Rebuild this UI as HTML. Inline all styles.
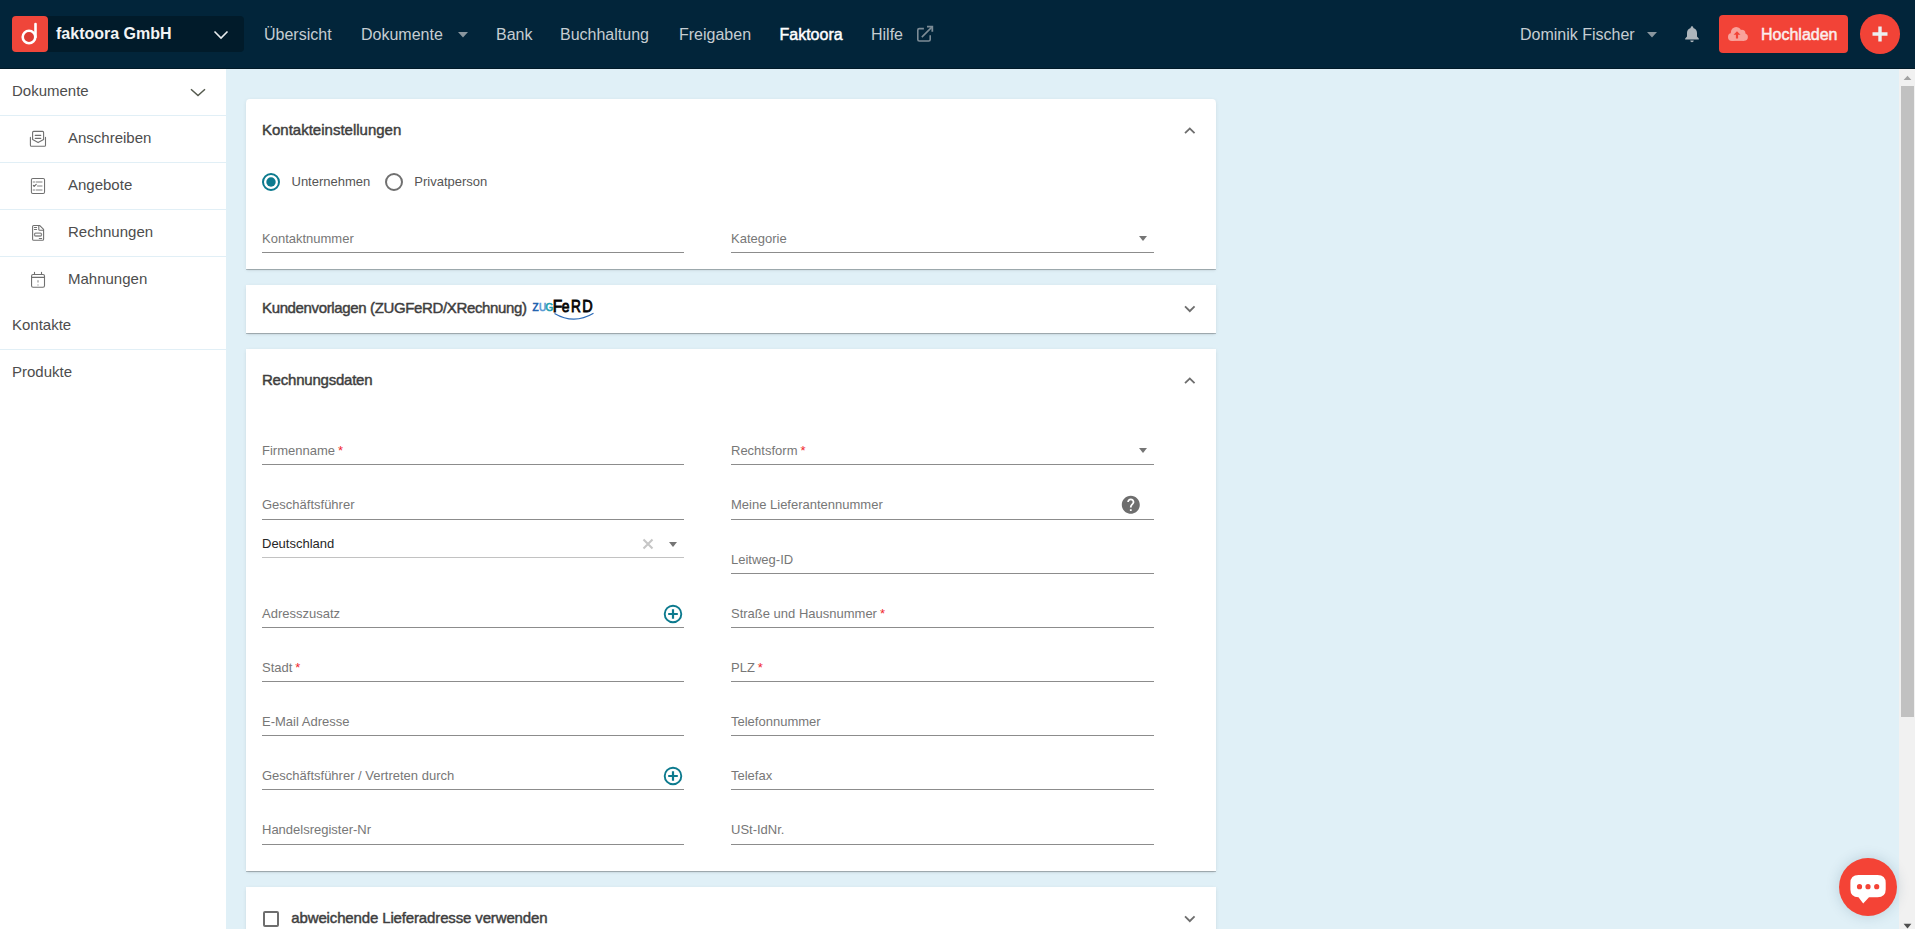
<!DOCTYPE html>
<html><head><meta charset="utf-8">
<style>
*{box-sizing:border-box;margin:0;padding:0}
html,body{width:1915px;height:929px;overflow:hidden}
body{position:relative;background:#e0f0f7;font-family:"Liberation Sans",sans-serif}
.a{position:absolute;white-space:nowrap;line-height:1}
#hdr{position:absolute;left:0;top:0;width:1915px;height:69px;background:#02253a;border-bottom:1px solid #011a28}
.nav{font-size:16px;color:#c6cdd2;top:26.5px}
#side{position:absolute;left:0;top:69px;width:226px;height:860px;background:#fff}
.sep{position:absolute;left:0;width:226px;height:1px;background:#e1eff6}
.st{font-size:15px;color:#4d4d4d}
.card{position:absolute;left:246px;width:970px;background:#fff;border-radius:4px;
 box-shadow:0 1px 0 0 rgba(0,0,0,.2),0 2px 2px -1px rgba(0,0,0,.12),0 1px 4px 0 rgba(0,0,0,.07)}
.h{font-size:15px;color:#3e3e3e;-webkit-text-stroke:0.45px #3e3e3e}
.lb{font-size:13px;color:#777}
.ul{position:absolute;height:1px;background:#8c8c8c}
.req{color:#f0262c}
#sb{position:absolute;left:1899px;top:69px;width:16px;height:860px;background:#f1f1f1}
</style></head><body>

<div id="hdr"></div>
<!-- logo -->
<div class="a" style="left:40px;top:16px;width:204px;height:36px;background:#011b2a;border-radius:4px"></div>
<div class="a" style="left:12px;top:16px;width:36px;height:36px;background:#ef463a;border-radius:4px"></div>
<svg class="a" style="left:12px;top:16px" width="36" height="36" viewBox="0 0 36 36">
 <circle cx="17" cy="21" r="6.3" fill="#dc3c33" stroke="#fff" stroke-width="2.6"/>
 <line x1="23.5" y1="8" x2="23.5" y2="21" stroke="#fff" stroke-width="2.6" stroke-linecap="round"/>
</svg>
<div class="a" style="left:56px;top:26px;font-size:16px;font-weight:bold;color:#f2f4f5">faktoora GmbH</div>
<svg class="a" style="left:213px;top:30px" width="16" height="10" viewBox="0 0 16 10"><path d="M1.5 1.5 L8 8 L14.5 1.5" fill="none" stroke="#e8ecee" stroke-width="1.6"/></svg>

<div class="a nav" style="left:264px">Übersicht</div>
<div class="a nav" style="left:361px">Dokumente</div>
<svg class="a" style="left:458px;top:32px" width="10" height="6" viewBox="0 0 10 6"><path d="M0 0H10L5 5.5Z" fill="#8a969e"/></svg>
<div class="a nav" style="left:496px">Bank</div>
<div class="a nav" style="left:560px">Buchhaltung</div>
<div class="a nav" style="left:679px">Freigaben</div>
<div class="a nav" style="left:779.5px;color:#fff;-webkit-text-stroke:0.45px #fff">Faktoora</div>
<div class="a nav" style="left:871px">Hilfe</div>
<svg class="a" style="left:912px;top:22px" width="26" height="24" viewBox="0 0 26 24" fill="none" stroke="#7d8c96" stroke-width="1.6"><path d="M11.9 6.6H7.3Q5.8 6.6 5.8 8.1V17.5Q5.8 19 7.3 19H16.7Q18.2 19 18.2 17.5V13.2"/><path d="M9.8 15.1L19.8 5.1"/><path d="M15 4.7H20.3V9.8" stroke-width="1.8"/></svg>

<div class="a nav" style="left:1520px;top:27px">Dominik Fischer</div>
<svg class="a" style="left:1647px;top:32px" width="10" height="6" viewBox="0 0 10 6"><path d="M0 0H10L5 5.5Z" fill="#8a969e"/></svg>
<svg class="a" style="left:1684px;top:25px" width="16" height="18" viewBox="0 0 16 18"><path d="M8 1.2c.8 0 1.3.6 1.3 1.3v.4c2.3.6 3.7 2.6 3.7 5v3.6l1.8 2v1H1.2v-1l1.8-2V7.9c0-2.4 1.4-4.4 3.7-5v-.4C6.7 1.8 7.2 1.200 8 1.2zM6.3 15.6h3.4c0 1-.8 1.6-1.7 1.6s-1.7-.6-1.700-1.6z" fill="#aeb6bc"/></svg>

<div class="a" style="left:1719px;top:15px;width:129px;height:38px;background:#f24337;border-radius:4px"></div>
<svg class="a" style="left:1676px;top:20px" width="80" height="28" viewBox="0 0 80 28"><g fill="#f9a29b"><circle cx="60.2" cy="12.2" r="5.3"/><circle cx="65.8" cy="13.3" r="3.6"/><circle cx="56" cy="16.9" r="4"/><circle cx="68.2" cy="17.1" r="3.7"/><rect x="56" y="13" width="12.2" height="7.9"/></g><path d="M61 11.2L57.5 14.8H59.9V18.6H62.1V14.8H64.5Z" fill="#f24337"/></svg>
<div class="a" style="left:1761px;top:26.8px;font-size:16px;color:#fbeeee;-webkit-text-stroke:0.5px #fbeeee">Hochladen</div>
<div class="a" style="left:1860px;top:14px;width:40px;height:39.5px;border-radius:50%;background:#f24337"></div>
<svg class="a" style="left:1872px;top:26px" width="16" height="16" viewBox="0 0 16 16"><path d="M8 0.5V15.5M0.5 8H15.5" stroke="#eceff1" stroke-width="3.4"/></svg>

<!-- sidebar -->
<div id="side"></div>
<div class="a st" style="left:12px;top:83.1px">Dokumente</div>
<svg class="a" style="left:190px;top:88px" width="16" height="10" viewBox="0 0 16 10"><path d="M1 1.200L8 7.500L15 1.200" fill="none" stroke="#555a4e" stroke-width="1.5"/></svg>
<div class="sep" style="top:115px"></div>
<div class="a st" style="left:68px;top:130.4px">Anschreiben</div>
<div class="sep" style="top:162px"></div>
<div class="a st" style="left:68px;top:176.9px">Angebote</div>
<div class="sep" style="top:209px"></div>
<div class="a st" style="left:68px;top:223.8px">Rechnungen</div>
<div class="sep" style="top:256px"></div>
<div class="a st" style="left:68px;top:271.1px">Mahnungen</div>
<div class="a st" style="left:12px;top:317px">Kontakte</div>
<div class="sep" style="top:349px"></div>
<div class="a st" style="left:12px;top:363.7px">Produkte</div>

<!-- cards -->
<div class="card" style="top:99px;height:170px;border-radius:4px 4px 0 0"></div>
<div class="card" style="top:285px;height:48px;border-radius:0"></div>
<div class="card" style="top:349px;height:522px;border-radius:0"></div>
<div class="card" style="top:887px;height:80px;border-radius:0"></div>

<svg class="a" style="left:26px;top:126px" width="24" height="24" viewBox="0 0 24 24" fill="none" stroke="#707070" stroke-width="1.1" stroke-linecap="round" stroke-linejoin="round">
 <path d="M6.6 13.6V6.4Q6.6 5.4 7.6 5.4H16.6Q17.6 5.4 17.6 6.4V13.6L12.1 16.6L6.6 13.6Z"/>
 <path d="M9.3 9.4H14.7M9.3 12.4H14.7" stroke-width="1.2"/>
 <path d="M4.4 11.4V19.2Q4.4 20.3 5.5 20.3H18.4Q19.5 20.3 19.5 19.2V11.4"/>
</svg>
<svg class="a" style="left:26px;top:174px" width="24" height="24" viewBox="0 0 24 24" fill="none" stroke="#707070" stroke-width="1.05" stroke-linecap="round" stroke-linejoin="round">
 <rect x="5.4" y="4.45" width="13.15" height="14.95" rx="1.4"/>
 <path d="M7.3 7.9H8.5M10.3 7.9H15.9M7.3 15.9H8.5M10.3 15.9H15.9M11.6 12H15.9" stroke="#ababab" stroke-width="1.5"/>
 <path d="M7.4 11.5L8.2 12.4L10.2 10.4" stroke-width="1.2"/>
</svg>
<svg class="a" style="left:26px;top:221px" width="24" height="24" viewBox="0 0 24 24" fill="none" stroke="#707070" stroke-width="1.1" stroke-linecap="round" stroke-linejoin="round">
 <path d="M13.6 4.45H7.7Q6.6 4.45 6.6 5.5V18.2Q6.6 19.25 7.7 19.25H16.5Q17.6 19.25 17.6 18.2V8.3Z"/>
 <path d="M12.8 4.6V8.4Q12.8 9.3 13.7 9.3H17.5"/>
 <path d="M8.4 6.5H10.6M8.4 8.4H10.6" stroke-width="1.05"/>
 <rect x="8.5" y="12.1" width="7" height="2.9" rx="1.1" stroke="#8a8a8a" stroke-width="1.3"/>
 <path d="M13.3 17.4H15.7" stroke-width="1.05"/>
</svg>
<svg class="a" style="left:26px;top:268px" width="24" height="24" viewBox="0 0 24 24" fill="none" stroke="#707070" stroke-width="1.1" stroke-linecap="round" stroke-linejoin="round">
 <rect x="5.55" y="6.45" width="12.95" height="12.8" rx="1.5"/>
 <path d="M5.55 9.4H18.5"/>
 <path d="M8.5 4.3V6.4M15.5 4.3V6.4"/>
 <path d="M12 12.2V14.6M12 16.4V17.5" stroke="#b0b0b0" stroke-width="1.6" stroke-linecap="butt"/>
</svg>
<div class="a h" style="left:262px;top:122.3px">Kontakteinstellungen</div>
<svg class="a" style="left:1179px;top:120px" width="21.6" height="21.6" viewBox="0 0 24 24"><path d="M12 8l-6 6 1.41 1.41L12 10.83l4.59 4.58L18 14z" fill="#6e6e6e"/></svg>
<svg class="a" style="left:261px;top:172px" width="20" height="20" viewBox="0 0 20 20"><circle cx="10" cy="10" r="8" fill="none" stroke="#0c7a8e" stroke-width="2"/><circle cx="10" cy="10" r="4.7" fill="#0c7a8e"/></svg>
<div class="a lb" style="left:291.5px;top:174.8px;color:#555">Unternehmen</div>
<svg class="a" style="left:383.7px;top:172px" width="20" height="20" viewBox="0 0 20 20"><circle cx="10" cy="10" r="8" fill="none" stroke="#707070" stroke-width="2"/></svg>
<div class="a lb" style="left:414.3px;top:174.8px;color:#555">Privatperson</div>
<div class="a lb" style="left:262px;top:231.5px">Kontaktnummer</div><div class="ul" style="left:262px;top:252px;width:422px;background:#8c8c8c"></div>
<div class="a lb" style="left:731px;top:231.5px">Kategorie</div><div class="ul" style="left:731px;top:252px;width:423px;background:#8c8c8c"></div>
<div class="a" style="left:1138.5px;top:236px;width:0;height:0;border-left:4.5px solid transparent;border-right:4.5px solid transparent;border-top:5px solid #757575"></div>
<div class="a h" style="left:262px;top:300.1px;letter-spacing:-0.36px">Kundenvorlagen (ZUGFeRD/XRechnung)</div>
<svg class="a" style="left:530px;top:294px" width="70" height="30" viewBox="0 0 70 30">
 <g font-family="Liberation Sans" font-size="10">
 <text x="2.6" y="17.4" fill="#1d5fae" stroke="#1d5fae" stroke-width="0.6">Z</text>
 <text x="9" y="17.4" fill="#5a9ad6" stroke="#5a9ad6" stroke-width="0.6">U</text>
 <text x="15.6" y="17.4" fill="#1c9fb0" stroke="#1c9fb0" stroke-width="0.6">G</text>
 </g>
 <g font-family="Liberation Sans" font-size="17" fill="#050505" stroke="#050505" stroke-width="0.85"><text transform="translate(22.8,17.6) scale(0.92,1)">F</text><text transform="translate(31.8,17.6) scale(0.82,1)">e</text><text transform="translate(41,17.6) scale(0.8,1)">R</text><text transform="translate(52.3,17.6) scale(0.85,1)">D</text></g>
 <path d="M24.5 19.5Q44 31 63.5 19.3" fill="none" stroke="#2b6bb8" stroke-width="1.2"/>
</svg>
<svg class="a" style="left:1178.7px;top:298.1px" width="21.6" height="21.6" viewBox="0 0 24 24"><path d="M16.59 8.59L12 13.17 7.41 8.59 6 10l6 6 6-6z" fill="#6e6e6e"/></svg>
<div class="a h" style="left:262px;top:372.4px;letter-spacing:-0.22px">Rechnungsdaten</div>
<svg class="a" style="left:1178.9px;top:370.3px" width="21.6" height="21.6" viewBox="0 0 24 24"><path d="M12 8l-6 6 1.41 1.41L12 10.83l4.59 4.58L18 14z" fill="#6e6e6e"/></svg>
<div class="a lb" style="left:262px;top:443.5px">Firmenname<span class="req" style="margin-left:3px">*</span></div><div class="ul" style="left:262px;top:464px;width:422px;background:#8c8c8c"></div>
<div class="a lb" style="left:262px;top:497.6px">Geschäftsführer</div><div class="ul" style="left:262px;top:519px;width:422px;background:#8c8c8c"></div>
<div class="a lb" style="left:262px;top:606.5px">Adresszusatz</div><div class="ul" style="left:262px;top:627px;width:422px;background:#8c8c8c"></div>
<div class="a lb" style="left:262px;top:660.5px">Stadt<span class="req" style="margin-left:3px">*</span></div><div class="ul" style="left:262px;top:681px;width:422px;background:#8c8c8c"></div>
<div class="a lb" style="left:262px;top:714.5px">E-Mail Adresse</div><div class="ul" style="left:262px;top:735px;width:422px;background:#8c8c8c"></div>
<div class="a lb" style="left:262px;top:768.5px">Geschäftsführer / Vertreten durch</div><div class="ul" style="left:262px;top:789px;width:422px;background:#8c8c8c"></div>
<div class="a lb" style="left:262px;top:822.6px">Handelsregister-Nr</div><div class="ul" style="left:262px;top:844px;width:422px;background:#8c8c8c"></div>
<div class="a lb" style="left:262px;top:536.6px;color:#262626">Deutschland</div>
<div class="ul" style="left:262px;top:557px;width:422px;background:#c2c2c2"></div>
<svg class="a" style="left:642px;top:538px" width="12" height="12" viewBox="0 0 12 12"><path d="M1.5 1.5L10.5 10.5M10.5 1.5L1.5 10.5" stroke="#c6c6c6" stroke-width="2.1"/></svg>
<div class="a" style="left:668.5px;top:542px;width:0;height:0;border-left:4.5px solid transparent;border-right:4.5px solid transparent;border-top:5px solid #757575"></div>
<div class="a lb" style="left:731px;top:443.5px">Rechtsform<span class="req" style="margin-left:3px">*</span></div><div class="ul" style="left:731px;top:464px;width:423px;background:#8c8c8c"></div>
<div class="a lb" style="left:731px;top:497.6px">Meine Lieferantennummer</div><div class="ul" style="left:731px;top:519px;width:423px;background:#8c8c8c"></div>
<div class="a lb" style="left:731px;top:552.5px">Leitweg-ID</div><div class="ul" style="left:731px;top:573px;width:423px;background:#8c8c8c"></div>
<div class="a lb" style="left:731px;top:606.5px">Straße und Hausnummer<span class="req" style="margin-left:3px">*</span></div><div class="ul" style="left:731px;top:627px;width:423px;background:#8c8c8c"></div>
<div class="a lb" style="left:731px;top:660.5px">PLZ<span class="req" style="margin-left:3px">*</span></div><div class="ul" style="left:731px;top:681px;width:423px;background:#8c8c8c"></div>
<div class="a lb" style="left:731px;top:714.5px">Telefonnummer</div><div class="ul" style="left:731px;top:735px;width:423px;background:#8c8c8c"></div>
<div class="a lb" style="left:731px;top:768.5px">Telefax</div><div class="ul" style="left:731px;top:789px;width:423px;background:#8c8c8c"></div>
<div class="a lb" style="left:731px;top:822.6px">USt-IdNr.</div><div class="ul" style="left:731px;top:844px;width:423px;background:#8c8c8c"></div>
<div class="a" style="left:1138.5px;top:447.5px;width:0;height:0;border-left:4.5px solid transparent;border-right:4.5px solid transparent;border-top:5px solid #757575"></div>
<svg class="a" style="left:1120.2px;top:494.2px" width="21.6" height="21.6" viewBox="0 0 24 24"><path fill="#6e6e6e" d="M12 2C6.48 2 2 6.48 2 12s4.48 10 10 10 10-4.48 10-10S17.52 2 12 2zm1 17h-2v-2h2v2zm2.070-7.750l-.9.920C13.450 12.900 13 13.500 13 15h-2v-.5c0-1.100.450-2.100 1.170-2.830l1.240-1.260c.370-.360.590-.860.590-1.410 0-1.100-.9-2-2-2s-2 .9-2 2H8c0-2.210 1.790-4 4-4s4 1.790 4 4c0 .880-.360 1.680-.930 2.250z"/></svg>
<svg class="a" style="left:663px;top:604px" width="20" height="20" viewBox="0 0 20 20"><circle cx="10" cy="10" r="8.3" fill="none" stroke="#0c7a8e" stroke-width="1.9"/><path d="M10 5.2V14.8M5.2 10H14.8" stroke="#0c7a8e" stroke-width="2.2"/></svg>
<svg class="a" style="left:663px;top:766px" width="20" height="20" viewBox="0 0 20 20"><circle cx="10" cy="10" r="8.3" fill="none" stroke="#0c7a8e" stroke-width="1.9"/><path d="M10 5.2V14.8M5.2 10H14.8" stroke="#0c7a8e" stroke-width="2.2"/></svg>
<div class="a" style="left:263px;top:911px;width:16px;height:16px;border:2px solid #6e6e6e;border-radius:2px"></div>
<div class="a h" style="left:291.3px;top:910.1px;letter-spacing:-0.14px">abweichende Lieferadresse verwenden</div>
<svg class="a" style="left:1178.7px;top:907.9px" width="21.6" height="21.6" viewBox="0 0 24 24"><path d="M16.59 8.59L12 13.17 7.41 8.59 6 10l6 6 6-6z" fill="#6e6e6e"/></svg>
<svg class="a" style="left:1899px;top:69px" width="16" height="860" viewBox="0 0 16 860"><rect width="16" height="860" fill="#f1f1f1"/><path d="M4.6 11H12.4L8.5 6.8Z" fill="#a3a3a3"/><rect x="2" y="17" width="13" height="631" fill="#c1c1c1"/><path d="M4.6 854.8H12.4L8.5 859.6Z" fill="#505050"/></svg>
<div class="a" style="left:1839px;top:858px;width:58px;height:58px;border-radius:50%;background:#f44336;box-shadow:0 0 14px rgba(0,60,90,.18)"></div>
<svg class="a" style="left:1848px;top:872px" width="40" height="34" viewBox="0 0 40 34">
 <path d="M10.5 3H29.5Q37.7 3 37.7 11V17.5Q37.7 25.2 29.5 25.2H21L15.2 31.6L10.5 25.2Q2.4 25.2 2.4 17.5V11Q2.4 3 10.5 3Z" fill="#fff"/>
 <circle cx="11.5" cy="14.7" r="2.6" fill="#f44336"/><circle cx="20" cy="14.7" r="2.6" fill="#f44336"/><circle cx="28.7" cy="14.7" r="2.6" fill="#f44336"/>
</svg>
</body></html>
